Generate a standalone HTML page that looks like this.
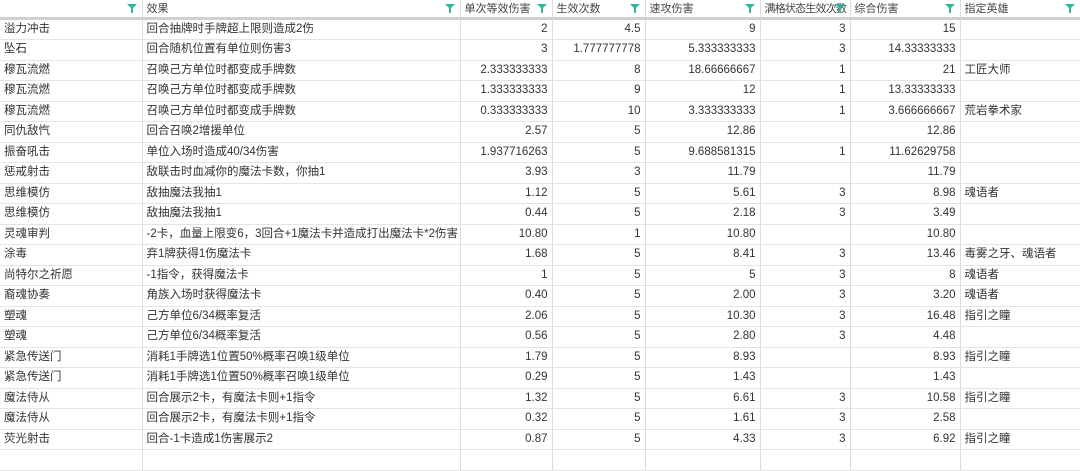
<!DOCTYPE html>
<html><head><meta charset="utf-8"><style>
*{margin:0;padding:0;box-sizing:border-box}
body{width:1080px;height:455px;overflow:hidden;background:#fff;font-family:"Liberation Sans","Noto Sans CJK SC",sans-serif;font-size:11.5px;color:#333}
table{position:absolute;left:0;top:0;border-collapse:collapse;table-layout:fixed;width:1080px}
td{height:20.5px;border-right:1px solid #dcdcdc;border-bottom:1px solid #e4e4e4;padding:0 4px;white-space:nowrap;overflow:hidden;line-height:19px}
td.n{text-align:right}
tr.h td{height:17px;line-height:16px;border-bottom:3px solid #d0d0d0;position:relative;padding-left:4px;color:#444;font-size:11px;padding-top:1px}
.f{position:absolute;right:5px;top:4px;width:0;height:0;border-left:5px solid transparent;border-right:5px solid transparent;border-top:5px solid #2fb59b}
.f:after{content:"";position:absolute;left:-1px;top:-1px;width:2px;height:5px;background:#2fb59b}
.t{letter-spacing:-0.8px}
</style></head><body>
<table>
<colgroup><col style="width:142px"><col style="width:318px"><col style="width:92px"><col style="width:93px"><col style="width:115px"><col style="width:90px"><col style="width:110px"><col style="width:120px"></colgroup>
<tr class="h"><td><span class="f"></span></td><td>效果<span class="f"></span></td><td>单次等效伤害<span class="f"></span></td><td>生效次数<span class="f"></span></td><td>速攻伤害<span class="f"></span></td><td class="t">满格状态生效次数<span class="f"></span></td><td>综合伤害<span class="f"></span></td><td>指定英雄<span class="f"></span></td></tr>
<tr><td>溢力冲击</td><td>回合抽牌时手牌超上限则造成2伤</td><td class="n">2</td><td class="n">4.5</td><td class="n">9</td><td class="n">3</td><td class="n">15</td><td></td></tr>
<tr><td>坠石</td><td>回合随机位置有单位则伤害3</td><td class="n">3</td><td class="n">1.777777778</td><td class="n">5.333333333</td><td class="n">3</td><td class="n">14.33333333</td><td></td></tr>
<tr><td>穆瓦流燃</td><td>召唤己方单位时都变成手牌数</td><td class="n">2.333333333</td><td class="n">8</td><td class="n">18.66666667</td><td class="n">1</td><td class="n">21</td><td>工匠大师</td></tr>
<tr><td>穆瓦流燃</td><td>召唤己方单位时都变成手牌数</td><td class="n">1.333333333</td><td class="n">9</td><td class="n">12</td><td class="n">1</td><td class="n">13.33333333</td><td></td></tr>
<tr><td>穆瓦流燃</td><td>召唤己方单位时都变成手牌数</td><td class="n">0.333333333</td><td class="n">10</td><td class="n">3.333333333</td><td class="n">1</td><td class="n">3.666666667</td><td>荒岩拳术家</td></tr>
<tr><td>同仇敌忾</td><td>回合召唤2增援单位</td><td class="n">2.57</td><td class="n">5</td><td class="n">12.86</td><td class="n"></td><td class="n">12.86</td><td></td></tr>
<tr><td>振奋吼击</td><td>单位入场时造成40/34伤害</td><td class="n">1.937716263</td><td class="n">5</td><td class="n">9.688581315</td><td class="n">1</td><td class="n">11.62629758</td><td></td></tr>
<tr><td>惩戒射击</td><td>敌联击时血减你的魔法卡数，你抽1</td><td class="n">3.93</td><td class="n">3</td><td class="n">11.79</td><td class="n"></td><td class="n">11.79</td><td></td></tr>
<tr><td>思维模仿</td><td>敌抽魔法我抽1</td><td class="n">1.12</td><td class="n">5</td><td class="n">5.61</td><td class="n">3</td><td class="n">8.98</td><td>魂语者</td></tr>
<tr><td>思维模仿</td><td>敌抽魔法我抽1</td><td class="n">0.44</td><td class="n">5</td><td class="n">2.18</td><td class="n">3</td><td class="n">3.49</td><td></td></tr>
<tr><td>灵魂审判</td><td>-2卡，血量上限变6，3回合+1魔法卡并造成打出魔法卡*2伤害</td><td class="n">10.80</td><td class="n">1</td><td class="n">10.80</td><td class="n"></td><td class="n">10.80</td><td></td></tr>
<tr><td>涂毒</td><td>弃1牌获得1伤魔法卡</td><td class="n">1.68</td><td class="n">5</td><td class="n">8.41</td><td class="n">3</td><td class="n">13.46</td><td>毒雾之牙、魂语者</td></tr>
<tr><td>尚特尔之祈愿</td><td>-1指令，获得魔法卡</td><td class="n">1</td><td class="n">5</td><td class="n">5</td><td class="n">3</td><td class="n">8</td><td>魂语者</td></tr>
<tr><td>裔魂协奏</td><td>角族入场时获得魔法卡</td><td class="n">0.40</td><td class="n">5</td><td class="n">2.00</td><td class="n">3</td><td class="n">3.20</td><td>魂语者</td></tr>
<tr><td>塑魂</td><td>己方单位6/34概率复活</td><td class="n">2.06</td><td class="n">5</td><td class="n">10.30</td><td class="n">3</td><td class="n">16.48</td><td>指引之瞳</td></tr>
<tr><td>塑魂</td><td>己方单位6/34概率复活</td><td class="n">0.56</td><td class="n">5</td><td class="n">2.80</td><td class="n">3</td><td class="n">4.48</td><td></td></tr>
<tr><td>紧急传送门</td><td>消耗1手牌选1位置50%概率召唤1级单位</td><td class="n">1.79</td><td class="n">5</td><td class="n">8.93</td><td class="n"></td><td class="n">8.93</td><td>指引之瞳</td></tr>
<tr><td>紧急传送门</td><td>消耗1手牌选1位置50%概率召唤1级单位</td><td class="n">0.29</td><td class="n">5</td><td class="n">1.43</td><td class="n"></td><td class="n">1.43</td><td></td></tr>
<tr><td>魔法侍从</td><td>回合展示2卡，有魔法卡则+1指令</td><td class="n">1.32</td><td class="n">5</td><td class="n">6.61</td><td class="n">3</td><td class="n">10.58</td><td>指引之瞳</td></tr>
<tr><td>魔法侍从</td><td>回合展示2卡，有魔法卡则+1指令</td><td class="n">0.32</td><td class="n">5</td><td class="n">1.61</td><td class="n">3</td><td class="n">2.58</td><td></td></tr>
<tr><td>荧光射击</td><td>回合-1卡造成1伤害展示2</td><td class="n">0.87</td><td class="n">5</td><td class="n">4.33</td><td class="n">3</td><td class="n">6.92</td><td>指引之瞳</td></tr>
<tr><td></td><td></td><td></td><td></td><td></td><td></td><td></td><td></td></tr>
</table>
</body></html>
